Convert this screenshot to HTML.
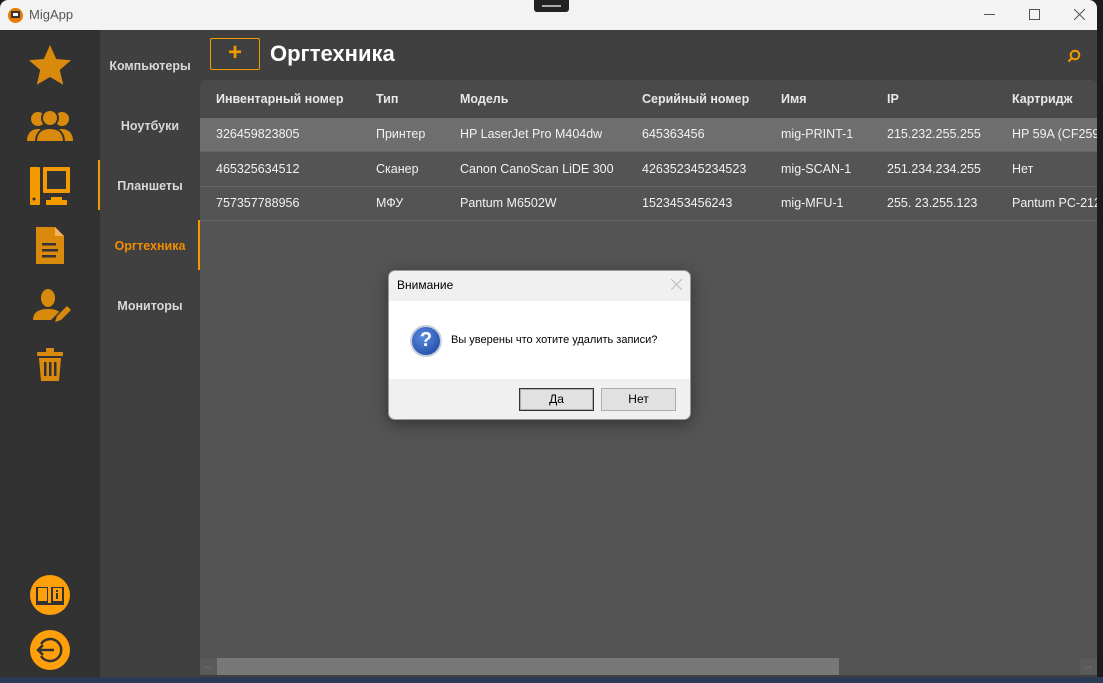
<!DOCTYPE html>
<html><head><meta charset="utf-8"><style>
*{margin:0;padding:0;box-sizing:border-box}
body{width:1103px;height:683px;overflow:hidden;background:#1c1c1c;font-family:"Segoe UI","Liberation Sans","DejaVu Sans",sans-serif;position:relative}
.abs{position:absolute}
#title{left:0;top:0;width:1097px;height:30px;background:#f3f3f3;border-radius:8px 8px 0 0}
#title .t{left:29px;top:7px;font-size:13px;color:#555}
#side{left:0;top:30px;width:100px;height:647px;background:#323232}
#nav{left:100px;top:30px;width:100px;height:647px;background:#404040}
#main{left:200px;top:30px;width:897px;height:647px;background:#404040}
.navi{position:absolute;left:0;width:100px;text-align:center;font-size:12.5px;font-weight:bold;color:#d8d8d8}
#panel{left:200px;top:80px;width:897px;height:595px;background:#545454;border-radius:6px 6px 0 0;overflow:hidden}
.row{position:absolute;left:0;width:897px;height:34px;font-size:12.5px;color:#f2f2f2;border-bottom:1px solid #666}
.row span{position:absolute;top:9px;white-space:nowrap}
.hdr{background:#4a4a4a;height:38px;font-weight:bold;color:#e8e8e8}
.hdr span{top:12px}
#dlg{left:388px;top:270px;width:303px;height:150px;background:#f0f0f0;border:1px solid #999;border-radius:7px;overflow:hidden;box-shadow:0 4px 16px rgba(0,0,0,.4)}
.btn{position:absolute;top:117px;width:75px;height:23px;background:#e1e1e1;border:1px solid #adadad;font-size:12px;text-align:center;line-height:21px;color:#000}
</style></head><body>
<div class="abs" style="left:0;top:677px;width:1103px;height:6px;background:#2a3b55"></div>
<div class="abs" id="title">
 <div class="abs" style="left:8px;top:8px;width:15px;height:15px;border-radius:50%;background:#e87a00"><div class="abs" style="left:3px;top:3px;width:9px;height:7px;border:2px solid #333;background:#fff"></div></div>
 <div class="abs t">MigApp</div>
 <div class="abs" style="left:984px;top:14px;width:11px;height:1px;background:#555"></div>
 <div class="abs" style="left:1029px;top:9px;width:11px;height:11px;border:1px solid #555"></div>
 <svg class="abs" style="left:1074px;top:9px" width="11" height="11" viewBox="0 0 11 11"><path d="M0 0L11 11M11 0L0 11" stroke="#555" stroke-width="1"/></svg>
</div>
<div class="abs" style="left:534px;top:0;width:35px;height:12px;background:#222;border-radius:0 0 3px 3px"><div class="abs" style="left:8px;top:5px;width:19px;height:2px;background:#aaa"></div></div>
<div class="abs" id="side">
 <svg class="abs" style="left:26px;top:12px" width="48" height="48" viewBox="0 0 24 24"><path d="M12 1.5l3.1 7 7.4.6-5.6 4.9 1.7 7.4L12 17.5l-6.6 3.9 1.7-7.4L1.5 9.1l7.4-.6z" fill="#d98a0c"/></svg>
 <svg class="abs" style="left:27px;top:79px" width="46" height="34" viewBox="0 0 46 34"><g fill="#d98a0c"><circle cx="11" cy="10" r="7"/><circle cx="35" cy="10" r="7"/><path d="M0 32c0-8 5-12 11-12s11 4 11 12z"/><path d="M24 32c0-8 5-12 11-12s11 4 11 12z"/><circle cx="23" cy="9" r="8" stroke="#323232" stroke-width="2"/><path d="M9 33c0-10 6-14 14-14s14 4 14 14z" stroke="#323232" stroke-width="2"/></g></svg>
 <svg class="abs" style="left:30px;top:137px" width="40" height="40" viewBox="0 0 40 40"><g fill="#f29a00"><rect x="0" y="0" width="10" height="38" rx="1"/><rect x="13" y="0" width="27" height="26" rx="1"/><rect x="21" y="30" width="11" height="3"/><rect x="16" y="33" width="21" height="5"/></g><rect x="17" y="4" width="19" height="18" fill="#323232"/><circle cx="4" cy="32" r="1.5" fill="#323232"/></svg>
 <svg class="abs" style="left:36px;top:197px" width="28" height="37" viewBox="0 0 28 37"><path d="M0 0h19l9 9v28H0z" fill="#d98a0c"/><path d="M19 0v9h9" fill="#f2b15a"/><g fill="#323232"><rect x="6" y="16" width="14" height="2.5"/><rect x="6" y="22" width="16" height="2.5"/><rect x="6" y="28" width="14" height="2.5"/></g></svg>
 <svg class="abs" style="left:33px;top:258px" width="38" height="36" viewBox="0 0 38 36"><g fill="#d98a0c"><ellipse cx="15" cy="10" rx="7" ry="9"/><path d="M0 32c0-8 6-11 15-11 6 0 9 1 11 3l-8 8z"/><path d="M22 34l2-6 10-10 4 4-10 10z"/></g></svg>
 <svg class="abs" style="left:37px;top:318px" width="26" height="33" viewBox="0 0 26 33"><g fill="#d98a0c"><rect x="0" y="4" width="26" height="4" rx="1"/><rect x="9" y="0" width="8" height="4" rx="1"/><path d="M2 10h22l-2 23H4z"/></g><g fill="#323232"><rect x="7" y="14" width="2.5" height="14"/><rect x="12" y="14" width="2.5" height="14"/><rect x="17" y="14" width="2.5" height="14"/></g></svg>
 <svg class="abs" style="left:30px;top:545px" width="40" height="40" viewBox="0 0 40 40"><circle cx="20" cy="20" r="20" fill="#ff9f0a"/><path d="M6 12h12v16H6zM21 12h13v16H21z" fill="#323232"/><path d="M8 13h9v13H8zM23 13h9v13h-9z" fill="#ff9f0a"/><path d="M6 28h28v2H6z" fill="#323232"/><rect x="26" y="15" width="2" height="2" fill="#323232"/><rect x="26" y="18" width="2" height="6" fill="#323232"/></svg>
 <svg class="abs" style="left:30px;top:600px" width="40" height="40" viewBox="0 0 40 40"><circle cx="20" cy="20" r="20" fill="#ff9f0a"/><path d="M11 14a11 11 0 1 1 0 12" fill="none" stroke="#323232" stroke-width="2.5"/><path d="M24 20H8m5-5l-5 5 5 5" fill="none" stroke="#323232" stroke-width="2.5"/></svg>
</div>
<div class="abs" id="nav">
 <div class="navi" style="top:29px">Компьютеры</div>
 <div class="navi" style="top:89px">Ноутбуки</div>
 <div class="navi" style="top:149px">Планшеты</div>
 <div class="navi" style="top:209px;color:#f28c00">Оргтехника</div>
 <div class="navi" style="top:269px">Мониторы</div>
 <div class="abs" style="left:-2px;top:130px;width:2px;height:50px;background:#f29a00"></div>
 <div class="abs" style="left:98px;top:190px;width:2px;height:50px;background:#f29a00"></div>
</div>
<div class="abs" id="main">
 <div class="abs" style="left:10px;top:8px;width:50px;height:32px;border:1px solid #f29a00;border-radius:2px;color:#f29a00;font-size:24px;font-weight:bold;text-align:center;line-height:28px">+</div>
 <div class="abs" style="left:70px;top:11px;font-size:22px;font-weight:bold;color:#fff">Оргтехника</div>
 <svg class="abs" style="left:867px;top:19px" width="14" height="14" viewBox="0 0 14 14"><circle cx="8" cy="6" r="4.3" fill="none" stroke="#f29a00" stroke-width="2"/><path d="M5 9l-3.5 3.5" stroke="#f29a00" stroke-width="2"/></svg>
</div>
<div class="abs" id="panel">
 <div class="row hdr" style="top:0;border:none"><span style="left:16px">Инвентарный номер</span><span style="left:176px">Тип</span><span style="left:260px">Модель</span><span style="left:442px">Серийный номер</span><span style="left:581px">Имя</span><span style="left:687px">IP</span><span style="left:812px">Картридж</span></div>
 <div class="row" style="top:38px;background:#6e6e6e"><span style="left:16px">326459823805</span><span style="left:176px">Принтер</span><span style="left:260px">HP LaserJet Pro M404dw</span><span style="left:442px">645363456</span><span style="left:581px">mig-PRINT-1</span><span style="left:687px">215.232.255.255</span><span style="left:812px">HP 59A (CF259A)</span></div>
 <div class="row" style="top:73px"><span style="left:16px">465325634512</span><span style="left:176px">Сканер</span><span style="left:260px">Canon CanoScan LiDE 300</span><span style="left:442px">426352345234523</span><span style="left:581px">mig-SCAN-1</span><span style="left:687px">251.234.234.255</span><span style="left:812px">Нет</span></div>
 <div class="row" style="top:107px"><span style="left:16px">757357788956</span><span style="left:176px">МФУ</span><span style="left:260px">Pantum M6502W</span><span style="left:442px">1523453456243</span><span style="left:581px">mig-MFU-1</span><span style="left:687px">255. 23.255.123</span><span style="left:812px">Pantum PC-212</span></div>
 <div class="abs" style="left:0;top:578px;width:17px;height:17px;background:#5a5a5a;color:#777;font-size:11px;text-align:center;line-height:17px">←</div>
 <div class="abs" style="left:17px;top:578px;width:622px;height:17px;background:#787878"></div>
 <div class="abs" style="left:880px;top:578px;width:17px;height:17px;background:#5a5a5a;color:#777;font-size:11px;text-align:center;line-height:17px">→</div>
</div>
<div class="abs" id="dlg">
 <div class="abs" style="left:8px;top:7px;font-size:12px;color:#000">Внимание</div>
 <svg class="abs" style="left:282px;top:8px" width="11" height="11" viewBox="0 0 11 11"><path d="M0 0L11 11M11 0L0 11" stroke="#bbb" stroke-width="1"/></svg>
 <div class="abs" style="left:0;top:30px;width:303px;height:78px;background:#fff"></div>
 <div class="abs" style="left:21px;top:54px;width:32px;height:32px;border-radius:50%;background:radial-gradient(circle at 40% 35%,#5b8be0,#17409e);border:2px solid #c8cfdc;color:#fff;font-weight:bold;font-size:20px;text-align:center;line-height:27px">?</div>
 <div class="abs" style="left:62px;top:63px;font-size:11px;color:#000;white-space:nowrap">Вы уверены что хотите удалить записи?</div>
 <div class="btn" style="left:130px;border-color:#333;box-shadow:inset 0 0 0 1px #adadad">Да</div>
 <div class="btn" style="left:212px">Нет</div>
</div>
</body></html>
